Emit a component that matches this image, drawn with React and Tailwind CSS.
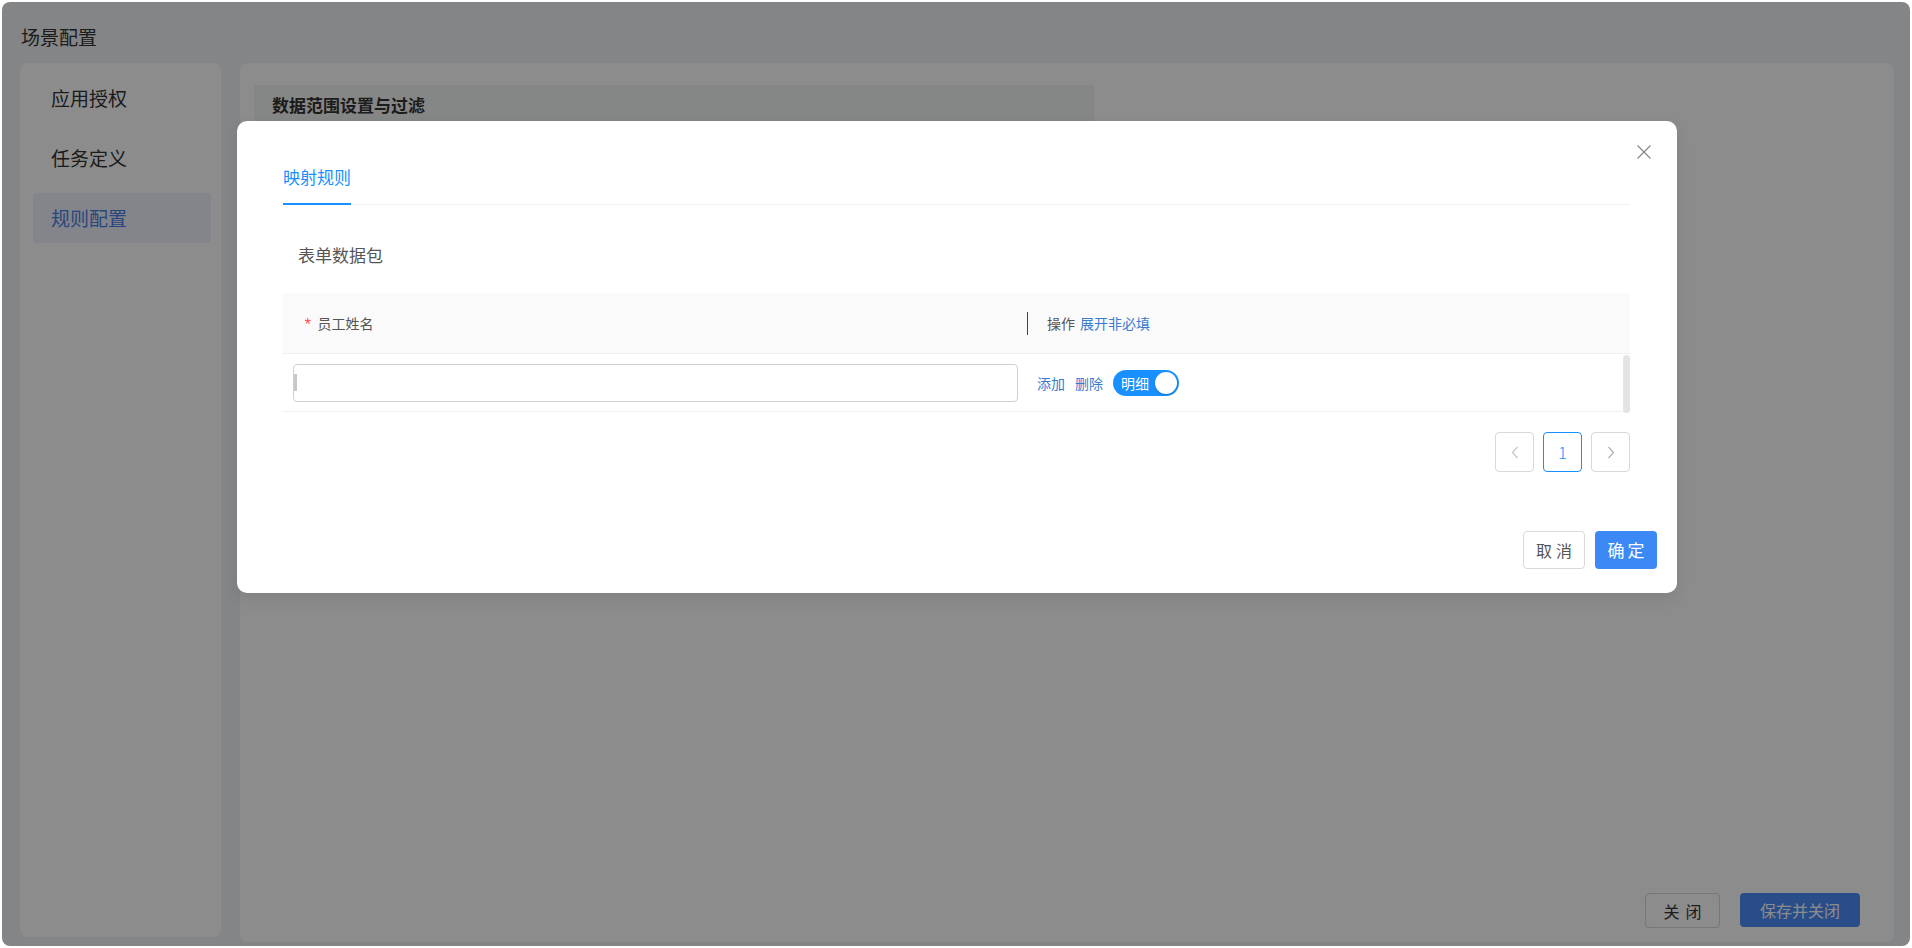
import React from "react";

const font = "font-['Microsoft_YaHei','Noto_Sans_CJK_SC','Noto_Sans',sans-serif]";

function Chevron({ dir = "left", className = "" }) {
  return (
    <svg width="8" height="13" viewBox="0 0 8 13" className={className} fill="none">
      {dir === "left" ? (
        <polyline points="6.5,1 1.5,6.5 6.5,12" stroke="currentColor" strokeWidth="1.2" />
      ) : (
        <polyline points="1.5,1 6.5,6.5 1.5,12" stroke="currentColor" strokeWidth="1.2" />
      )}
    </svg>
  );
}

function CloseIcon() {
  return (
    <svg width="16" height="16" viewBox="0 0 16 16" fill="none">
      <line x1="1.5" y1="1.5" x2="14.5" y2="14.5" stroke="#8a8a8a" strokeWidth="1.3" />
      <line x1="14.5" y1="1.5" x2="1.5" y2="14.5" stroke="#8a8a8a" strokeWidth="1.3" />
    </svg>
  );
}

function Sidebar() {
  const items = ["应用授权", "任务定义", "规则配置"];
  return (
    <aside className="mb-[5px] flex w-[201px] shrink-0 flex-col gap-[10px] rounded-lg bg-white pl-[13px] pr-[10px] pt-[10px]">
      {items.map((label, i) => (
        <div
          key={label}
          className={
            "flex h-[50px] items-center rounded pl-[18px] text-[19px] leading-[26px] " +
            (i === 2 ? "bg-[#eef3fc] text-[#4a80e6]" : "text-[#333]")
          }
        >
          {label}
        </div>
      ))}
    </aside>
  );
}

function MainPanel() {
  return (
    <main className="flex flex-1 flex-col rounded-lg bg-white">
      <div className="ml-[14px] mt-[22px] flex h-[40px] w-[840px] items-center bg-[#f3f4f5] pl-[18px]">
        <span className="text-[17px] font-bold leading-[24px] text-[#333]">数据范围设置与过滤</span>
      </div>
      <div className="mt-auto flex justify-end gap-[20px] pb-[14px] pr-[34px]">
        <button className="flex h-[35px] w-[75px] items-center justify-center rounded border border-[#d9d9d9] bg-white text-[16px] tracking-[6px] text-[#333]">
          <span className="pl-[6px]">关闭</span>
        </button>
        <button className="flex h-[34px] w-[120px] items-center justify-center rounded bg-[#4a8cf7] text-[16px] text-white">
          保存并关闭
        </button>
      </div>
    </main>
  );
}

function MappingModal() {
  return (
    <div className="absolute left-[235px] top-[119px] w-[1440px] rounded-[10px] bg-white shadow-[0_6px_16px_rgba(0,0,0,0.08)]">
      <button className="absolute right-[25px] top-[23px] flex h-4 w-4 items-center justify-center">
        <CloseIcon />
      </button>

      <div className="pl-[46px] pr-[47px] pt-[44px]">
        {/* tabs */}
        <div className="flex border-b border-[#f0f0f0]">
          <div className="-mb-px border-b-2 border-[#1890ff] pb-[14px] text-[17px] leading-[24px] text-[#1890ff]">
            映射规则
          </div>
        </div>

        <div className="mt-[38px] pl-[15px] text-[17px] leading-[24px] text-[#555]">表单数据包</div>

        {/* table */}
        <div className="mt-[26px]">
          <div className="flex h-[61px] items-center border-b border-[#f0f0f0] bg-[#fafafa] text-[14px] leading-[20px]">
            <div className="flex w-[744px] items-center pl-[20px] text-[#555]">
              <span className="mr-[5px] inline-block translate-y-[3px] font-['Liberation_Mono',monospace] text-[16px] leading-[20px] text-[#ff4d4f]">*</span>
              <span>员工姓名</span>
            </div>
            <div className="h-[23px] w-px bg-[#444]" />
            <div className="flex items-center gap-[5px] pl-[19px]">
              <span className="text-[#555]">操作</span>
              <span className="text-[#3a7bd0]">展开非必填</span>
            </div>
          </div>
          <div className="relative flex h-[58px] items-center border-b border-[#f0f0f0] text-[14px] leading-[20px]">
            <div className="w-[744px] pl-[10px] pr-[9px]">
              <div className="flex h-[38px] items-center rounded border border-[#d0d0d0] bg-white">
                <span className="h-[17px] w-[3px] bg-[#c8c8c8]" />
              </div>
            </div>
            <div className="flex items-center pl-[10px]">
              <span className="text-[#3a7bd0]">添加</span>
              <span className="ml-[10px] text-[#3a7bd0]">删除</span>
              <div className="ml-[10px] flex h-[26px] w-[66px] items-center justify-between rounded-full bg-[#1890ff] pl-[8px] pr-[2px]">
                <span className="text-[14px] leading-[20px] text-white">明细</span>
                <span className="h-[22px] w-[22px] rounded-full bg-white shadow-[0_1px_2px_rgba(0,0,0,0.2)]" />
              </div>
            </div>
            <div className="absolute right-0 top-[1px] h-[58px] w-[7px] rounded-full bg-[#e4e4e4]" />
          </div>
        </div>

        {/* pagination */}
        <div className="mt-[20px] flex justify-end gap-[9px]">
          <div className="flex h-[40px] w-[39px] items-center justify-center rounded border border-[#d9d9d9] text-[#c4c4c4]">
            <Chevron dir="left" />
          </div>
          <div className="flex h-[40px] w-[39px] items-center justify-center rounded border border-[#1890ff] text-[17px] font-light text-[#1890ff]">
            1
          </div>
          <div className="flex h-[40px] w-[39px] items-center justify-center rounded border border-[#d9d9d9] text-[#b0b0b0]">
            <Chevron dir="right" />
          </div>
        </div>
      </div>

      {/* footer */}
      <div className="mt-[59px] flex justify-end gap-[10px] pb-[24px] pr-[20px]">
        <button className="flex h-[38px] w-[62px] items-center justify-center rounded border border-[#d9d9d9] bg-white text-[16px] tracking-[4px] text-[#555]">
          <span className="pl-[4px]">取消</span>
        </button>
        <button className="flex h-[38px] w-[62px] items-center justify-center rounded bg-[#3c89f6] text-[17px] tracking-[3px] text-white">
          <span className="pl-[3px]">确定</span>
        </button>
      </div>
    </div>
  );
}

export default function App() {
  return (
    <div className={"h-[948px] w-[1912px] bg-white p-[2px] " + font}>
      <div className="relative flex h-full flex-col overflow-hidden rounded-lg bg-[#f0f2f5]">
        <div className="h-[61px] shrink-0 pl-[19px] pt-[22px] text-[19px] leading-[26px] text-[#333]">场景配置</div>
        <div className="flex flex-1 gap-[19px] pb-[4px] pl-[18px] pr-[16px]">
          <Sidebar />
          <MainPanel />
        </div>
        {/* modal mask */}
        <div className="absolute inset-0 bg-black/45" />
        <MappingModal />
      </div>
    </div>
  );
}
